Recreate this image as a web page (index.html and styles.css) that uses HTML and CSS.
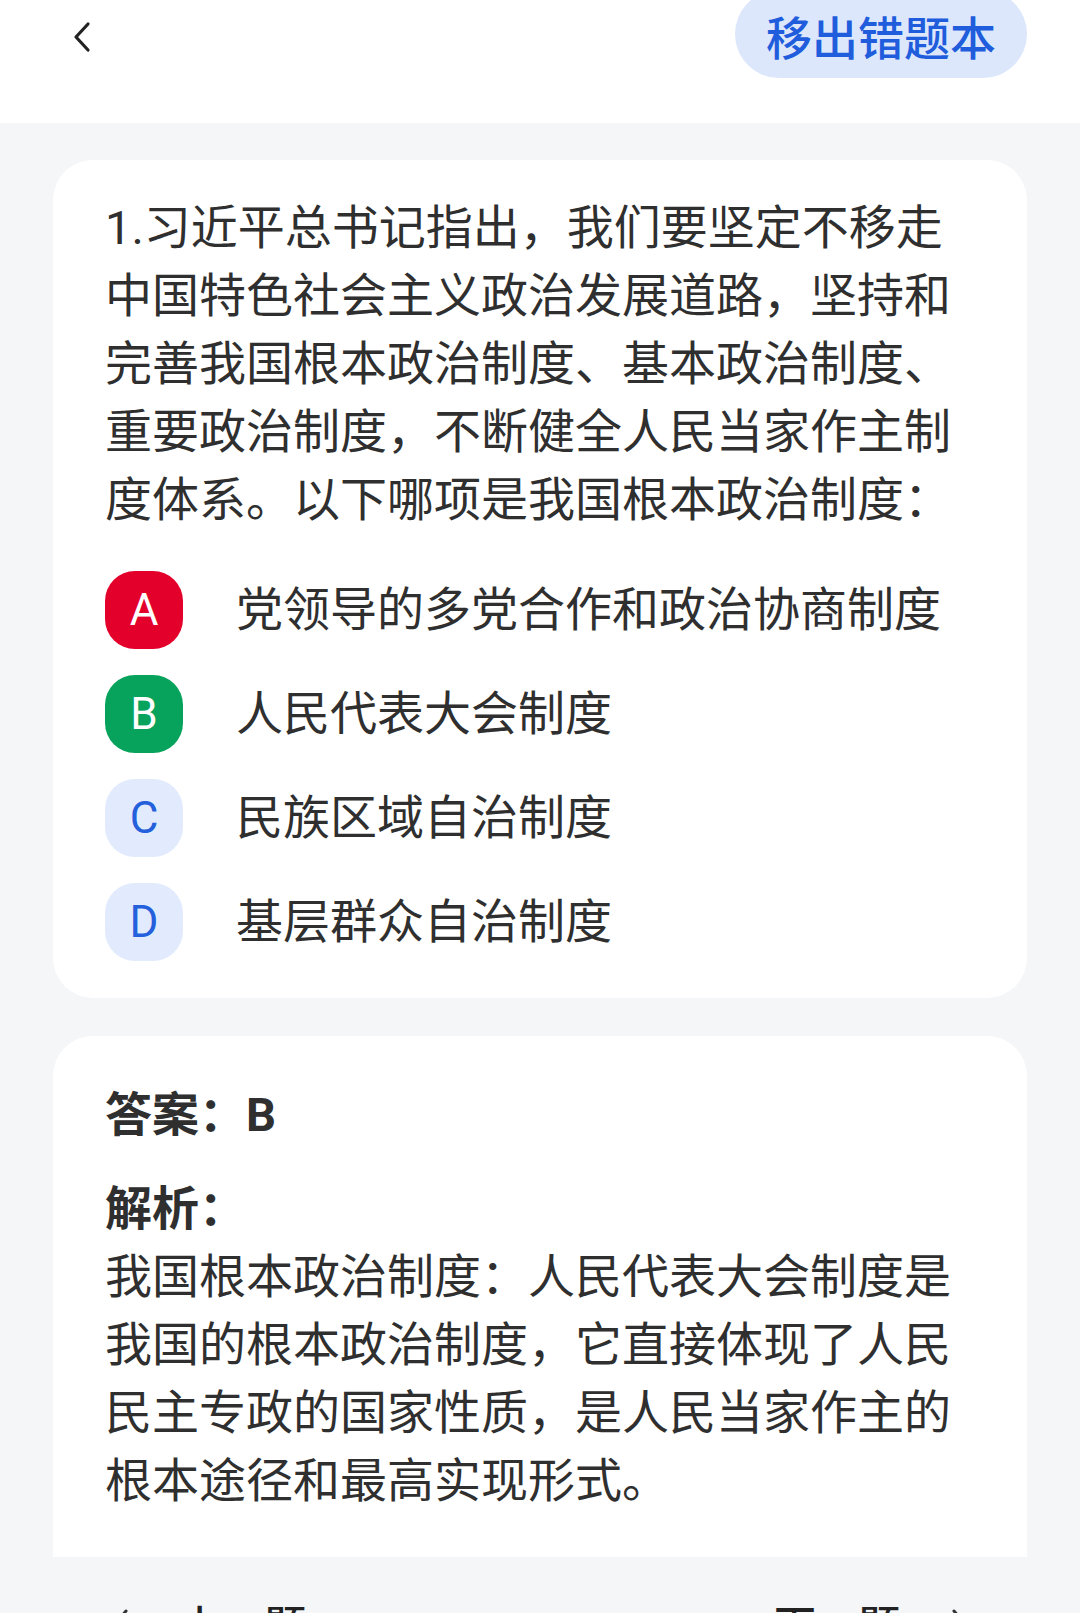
FILE: index.html
```html
<!DOCTYPE html>
<html lang="zh-CN">
<head>
<meta charset="utf-8">
<title>错题本</title>
<link rel="stylesheet" href="styles.css">
</head>
<body>
<header class="topbar">
  <a class="back" aria-label="返回">
    <svg width="20" height="32" viewBox="0 0 20 32"><path d="M16 3 L4 16 L16 29" fill="none" stroke="#222" stroke-width="3.2" stroke-linecap="round" stroke-linejoin="round"/></svg>
  </a>
  <button class="remove-btn">移出错题本</button>
</header>

<main class="content">
  <section class="card question-card">
    <p class="question">1.习近平总书记指出，我们要坚定不移走中国特色社会主义政治发展道路，坚持和完善我国根本政治制度、基本政治制度、重要政治制度，不断健全人民当家作主制度体系。以下哪项是我国根本政治制度：</p>
    <ul class="options">
      <li class="option"><span class="badge badge-wrong">A</span><span class="opt-text">党领导的多党合作和政治协商制度</span></li>
      <li class="option"><span class="badge badge-right">B</span><span class="opt-text">人民代表大会制度</span></li>
      <li class="option"><span class="badge">C</span><span class="opt-text">民族区域自治制度</span></li>
      <li class="option"><span class="badge">D</span><span class="opt-text">基层群众自治制度</span></li>
    </ul>
  </section>

  <section class="card answer-card">
    <p class="answer">答案：<span class="answer-letter">B</span></p>
    <p class="analysis-title">解析：</p>
    <p class="analysis">我国根本政治制度：人民代表大会制度是我国的根本政治制度，它直接体现了人民民主专政的国家性质，是人民当家作主的根本途径和最高实现形式。</p>
  </section>
</main>

<footer class="pager">
  <a class="pager-item">
    <svg class="arrow" width="18" height="30" viewBox="0 0 18 30"><path d="M14 3 L4 15 L14 27" fill="none" stroke="#333" stroke-width="3" stroke-linecap="round" stroke-linejoin="round"/></svg>
    <span>上一题</span>
  </a>
  <a class="pager-item">
    <span>下一题</span>
    <svg class="arrow" width="18" height="30" viewBox="0 0 18 30"><path d="M4 3 L14 15 L4 27" fill="none" stroke="#333" stroke-width="3" stroke-linecap="round" stroke-linejoin="round"/></svg>
  </a>
</footer>
</body>
</html>
```

FILE: styles.css
```css
html, body {
  margin: 0;
  padding: 0;
  height: 1613px;
  overflow: hidden;
}

body {
  background: #f5f6f8;
  font-family: Roboto, "Noto Sans CJK SC", sans-serif;
  color: #2f2f2f;
}

.topbar {
  height: 123px;
  background: #ffffff;
  display: flex;
  justify-content: space-between;
  align-items: flex-start;
  padding: 0 53px 0 72px;
  box-sizing: border-box;
}

.back {
  display: flex;
  margin-top: 21px;
}

.remove-btn {
  margin-top: -10px;
  height: 88px;
  padding: 2px 31px 0;
  border: none;
  border-radius: 44px;
  background: #dce7fc;
  color: #1f5ddc;
  font-family: "Noto Sans CJK SC", sans-serif;
  font-size: 46px;
  font-weight: 500;
  line-height: 1;
}

.content {
  padding: 37px 53px 0;
  display: flex;
  flex-direction: column;
  gap: 38px;
}

.card {
  background: #ffffff;
  border-radius: 40px;
}

.question-card {
  padding: 34px 53px 37px 52px;
}

.question {
  margin: 0;
  font-size: 47px;
  line-height: 68px;
  color: #2f2f2f;
}

.options {
  list-style: none;
  margin: 37px 0 0;
  padding: 0;
  display: flex;
  flex-direction: column;
  gap: 26px;
}

.option {
  display: flex;
  align-items: center;
  gap: 53px;
  height: 78px;
}

.badge {
  width: 78px;
  height: 78px;
  flex: none;
  border-radius: 30px;
  background: #e2ebfd;
  color: #2460dc;
  font-family: Roboto, sans-serif;
  font-size: 44px;
  display: flex;
  align-items: center;
  justify-content: center;
}

.badge-wrong {
  background: #e3002b;
  color: #ffffff;
}

.badge-right {
  background: #07a25c;
  color: #ffffff;
}

.opt-text {
  font-size: 47px;
  line-height: 68px;
  color: #2f2f2f;
}

.answer-card {
  padding: 45px 53px 42px 52px;
  border-radius: 40px 40px 0 0;
}

.answer {
  margin: 0;
  font-size: 47px;
  line-height: 68px;
  font-weight: 700;
  color: #2f2f2f;
}

.answer-letter {
  font-weight: 700;
}

.analysis-title {
  margin: 26px 0 0;
  font-size: 47px;
  line-height: 68px;
  font-weight: 700;
  color: #2f2f2f;
}

.analysis {
  margin: 0;
  font-size: 47px;
  line-height: 68px;
  color: #2f2f2f;
}

.pager {
  display: flex;
  justify-content: space-between;
  padding: 36px 112px 0 112px;
}

.pager-item {
  display: flex;
  align-items: center;
  gap: 50px;
  font-family: "Noto Sans CJK SC", sans-serif;
  font-size: 42px;
  font-weight: 500;
  color: #222;
  line-height: 60px;
}
```
